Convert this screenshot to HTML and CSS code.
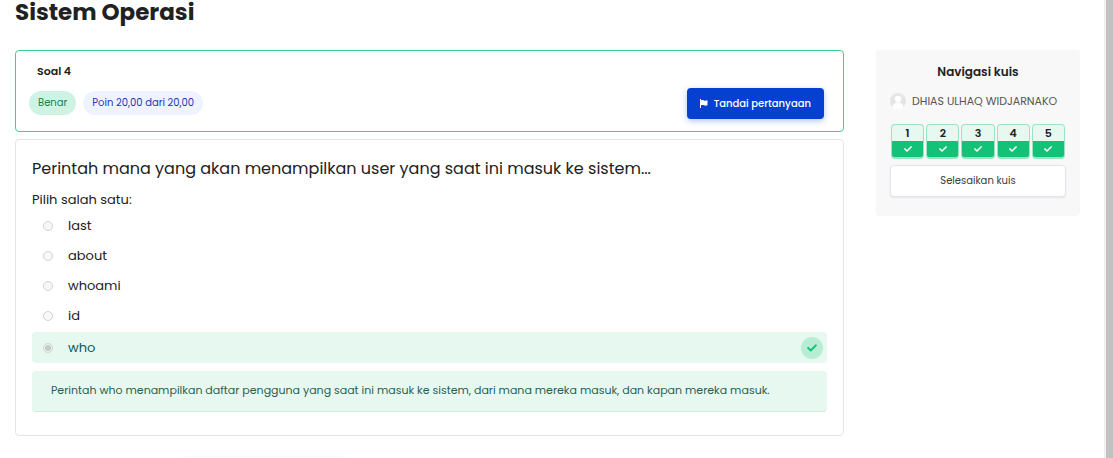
FILE: index.html
```html
<!DOCTYPE html>
<html lang="id">
<head>
<meta charset="utf-8">
<meta name="viewport" content="width=device-width, initial-scale=1">
<title>Sistem Operasi</title>
<link rel="stylesheet" href="styles.css">
</head>
<body>
<svg class="symbols" aria-hidden="true">
  <symbol id="check" viewBox="0 0 512 512"><path d="M173.900 439.400l-166.400-166.400c-10-10-10-26.200 0-36.200l36.200-36.200c10-10 26.200-10 36.200 0L192 312.700 432.100 72.600c10-10 26.200-10 36.200 0l36.200 36.200c10 10 10 26.200 0 36.200l-294.400 294.400c-10 10-26.200 10-36.200 0z"/></symbol>
</svg>
<div class="page">
  <div class="content">
    <h1 class="course-title">Sistem Operasi</h1>
    <div class="columns">
      <main class="quiz">
        <section class="info">
          <div>
            <h2 class="info-title">Soal 4</h2>
            <div class="badges">
              <span class="badge badge-correct">Benar</span>
              <span class="badge badge-points">Poin 20,00 dari 20,00</span>
            </div>
          </div>
          <button class="flag-button" type="button">
            <svg class="flag-icon" viewBox="0 0 8 9" aria-hidden="true"><path d="M0 0h1v1.500c1-.6 2-.5 3-.1s2 .3 3.500-.2v5c-1.500.6-2.500.5-3.500.1s-2-.5-3 0V9H0z"/></svg>
            Tandai pertanyaan
          </button>
        </section>
        <section class="question">
          <p class="question-text">Perintah mana yang akan menampilkan user yang saat ini masuk ke sistem...</p>
          <fieldset class="answers">
            <legend class="prompt">Pilih salah satu:</legend>
            <div class="option"><input class="radio" type="radio" name="answer" id="a1" disabled><label for="a1">last</label></div>
            <div class="option"><input class="radio" type="radio" name="answer" id="a2" disabled><label for="a2">about</label></div>
            <div class="option"><input class="radio" type="radio" name="answer" id="a3" disabled><label for="a3">whoami</label></div>
            <div class="option"><input class="radio" type="radio" name="answer" id="a4" disabled><label for="a4">id</label></div>
            <div class="option option-correct"><input class="radio" type="radio" name="answer" id="a5" checked disabled><label for="a5">who</label><span class="mark"><svg class="mark-icon" aria-hidden="true"><use href="#check"/></svg></span></div>
          </fieldset>
          <p class="feedback">Perintah who menampilkan daftar pengguna yang saat ini masuk ke sistem, dari mana mereka masuk, dan kapan mereka masuk.</p>
        </section>
        <div class="next-bar"></div>
      </main>
      <aside class="navigation">
        <h2 class="nav-title">Navigasi kuis</h2>
        <div class="user">
          <svg class="avatar" viewBox="0 0 16 16" aria-hidden="true"><circle cx="8" cy="8" r="8" fill="#e5e5e5"/><circle cx="8" cy="6" r="3.200" fill="#fff"/><path d="M2.500 14c.3-3 2.500-4.500 5.500-4.500s5.200 1.500 5.500 4.500L11 16H5z" fill="#fff"/></svg>
          <span>DHIAS ULHAQ WIDJARNAKO</span>
        </div>
        <nav class="numbers">
          <a class="number" href="#q1">1<span class="state"><svg class="state-icon" aria-hidden="true"><use href="#check"/></svg></span></a>
          <a class="number" href="#q2">2<span class="state"><svg class="state-icon" aria-hidden="true"><use href="#check"/></svg></span></a>
          <a class="number" href="#q3">3<span class="state"><svg class="state-icon" aria-hidden="true"><use href="#check"/></svg></span></a>
          <a class="number" href="#q4">4<span class="state"><svg class="state-icon" aria-hidden="true"><use href="#check"/></svg></span></a>
          <a class="number" href="#q5">5<span class="state"><svg class="state-icon" aria-hidden="true"><use href="#check"/></svg></span></a>
        </nav>
        <button class="finish-button" type="button">Selesaikan kuis</button>
      </aside>
    </div>
  </div>
  <div class="scroll-track"></div>
</div>
</body>
</html>
```
FILE: styles.css
```css
* { box-sizing: border-box; }
body {
  margin: 0;
  background: #fff;
  color: #212121;
  font-family: Poppins, Inter, "Open Sans", sans-serif;
  font-size: 13px;
}
h1, h2, p { margin: 0; }
button { font-family: inherit; cursor: pointer; }
.symbols { display: none; }
.page { display: flex; height: 100vh; overflow: hidden; }
.content { flex: 1; min-width: 0; padding: 0 24px 0 15px; }
.scroll-track { width: 9px; background: #c1c1c1; border-left: 2px solid #f0f0f0; }
.course-title { font-size: 23px; line-height: 24px; font-weight: 700; margin-bottom: 26px; }
.columns { display: flex; align-items: flex-start; gap: 32px; }
.quiz { flex: 1; min-width: 0; }

.info {
  display: flex;
  justify-content: space-between;
  align-items: flex-end;
  padding: 12px 19px 12px 13px;
  border: 1px solid #3dcf8e;
  border-radius: 4px;
  margin-bottom: 7px;
}
.info-title { font-size: 11px; line-height: 16px; font-weight: 600; margin: 0 0 12px 8px; }
.badges { display: flex; gap: 7px; margin-bottom: 4px; }
.badge { font-size: 10px; line-height: 24px; padding: 0 9px; border-radius: 12px; }
.badge-correct { background: #cff3e3; color: #1b7f52; }
.badge-points { background: #eff3ff; color: #1c38b8; }
.flag-button {
  display: flex;
  align-items: center;
  gap: 6px;
  height: 31px;
  padding: 0 13px;
  border: 0;
  border-radius: 4px;
  background: #0540d0;
  color: #fff;
  font-size: 10px;
  font-weight: 500;
  box-shadow: 0 2px 6px #0540d04d;
}
.flag-icon { width: 8px; height: 9px; fill: #fff; }

.question { padding: 17px 16px 23px; border: 1px solid #e5e5e5; border-radius: 4px; }
.question-text { font-size: 16px; line-height: 24px; margin-bottom: 9px; }
.answers { border: 0; margin: 0 0 8px; padding: 0; }
.prompt { padding: 0; line-height: 20px; margin-bottom: 1px; }
.option { display: flex; align-items: center; gap: 15px; height: 30px; padding: 0 4px 0 11px; }
.option-correct { height: 31px; margin-top: 1px; border-radius: 4px; background: #e7f8f0; color: #0c5a50; }
.radio {
  appearance: none;
  width: 10px;
  height: 10px;
  margin: 0;
  border: 1px solid #d2d2d2;
  border-radius: 50%;
  background: #f8f8f8;
}
.radio:checked { padding: 1px; background: #c8c8c8 content-box; }
.mark {
  display: grid;
  place-items: center;
  width: 22px;
  height: 22px;
  margin-left: auto;
  border-radius: 50%;
  background: #b7ecd5;
}
.mark-icon { width: 10px; height: 10px; fill: #13c177; }
.feedback {
  padding: 9px 19px 11px;
  border-bottom: 1px solid #cfeee0;
  border-radius: 4px;
  background: #e7f8f0;
  color: #285f50;
  font-size: 11px;
  line-height: 20px;
}
.next-bar { width: 160px; height: 32px; margin: 26px 0 0 170px; border-radius: 4px; box-shadow: 0 0 8px #0540d026; }

.navigation { width: 204px; padding: 14px 14px 19px; border-radius: 4px; background: #f8f8f8; }
.nav-title { font-size: 12px; line-height: 16px; font-weight: 600; text-align: center; margin-bottom: 13px; }
.user { display: flex; align-items: center; gap: 6px; font-size: 11px; line-height: 16px; color: #555; white-space: nowrap; }
.avatar { width: 16px; height: 16px; flex: none; }
.numbers { display: grid; grid-template-columns: repeat(5, 1fr); gap: 2px; margin: 15px 1px 6px; }
.number {
  overflow: hidden;
  border: 1px solid #9be4c3;
  border-bottom-width: 2px;
  border-radius: 4px;
  background: #e7f8f0;
  color: #212121;
  font-size: 11px;
  font-weight: 600;
  line-height: 16px;
  text-align: center;
  text-decoration: none;
}
.state { display: grid; place-items: center; height: 16px; background: #13c177; }
.state-icon { width: 8px; height: 8px; fill: #fff; }
.finish-button {
  display: block;
  width: 100%;
  height: 32px;
  border: 1px solid #e2e5f0;
  border-radius: 4px;
  background: #fff;
  color: #3b3b44;
  font-size: 10px;
  box-shadow: 0 1px 2px #00003014;
}
```
